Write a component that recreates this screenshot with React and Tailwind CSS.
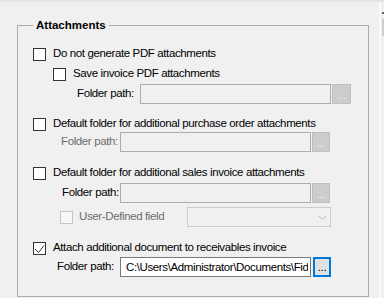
import React from "react";

const Box = ({ checked, disabled }) => (
  <span
    className={
      disabled
        ? "flex h-[13px] w-[13px] shrink-0 items-center justify-center border border-[#c5c5c5] bg-[#f7f7f7]"
        : "flex h-[13px] w-[13px] shrink-0 items-center justify-center border border-[#333333] bg-white"
    }
  >
    {checked && (
      <svg width="11" height="11" viewBox="0 0 11 11">
        <path d="M1 6 L4.5 9.5 L10 2.5" fill="none" stroke="#333333" strokeWidth="1" />
      </svg>
    )}
  </span>
);

const Dots = ({ active, wide }) => (
  <div
    className={
      active
        ? "ml-[2px] flex h-[20px] w-[18px] items-center justify-center border-2 border-[#0078d7] bg-[#e1e1e1] pt-[2px] text-black"
        : wide
        ? "ml-[1px] flex h-[20px] w-[19px] items-center justify-center border border-[#bfbfbf] bg-[#cccccc] pt-[3px] text-[#f2f2f2]"
        : "ml-[1px] flex h-[20px] w-[18px] items-center justify-center border border-[#bfbfbf] bg-[#cccccc] pt-[3px] text-[#f2f2f2]"
    }
  >
    ...
  </div>
);

const Field = ({ value }) => (
  <div
    className={
      value
        ? "h-[20px] w-[191px] border border-[#7a7a7a] bg-white pl-[5px] pr-[2px]"
        : "h-[20px] w-[191px] border border-[#adadad] bg-[#f0f0f0]"
    }
  >
    {value && (
      <div className="h-[18px] overflow-hidden whitespace-nowrap leading-[18px]">{value}</div>
    )}
  </div>
);

const CheckRow = ({ pad, checked, children }) => (
  <div className={`flex h-[16px] items-center ${pad}`}>
    <Box checked={checked} />
    <span className="ml-[7px] whitespace-nowrap">{children}</span>
  </div>
);

export default function App() {
  return (
    <div className="h-[298px] w-[384px] overflow-hidden bg-[#f0f0f0] font-['Liberation_Sans',Arial,sans-serif] text-[11.5px] tracking-[-0.38px] text-black">
      <div className="h-[2px] bg-[#e1e4e9]" />
      <div className="flex h-[296px]">
        <div className="w-[379px] pl-[17px] pt-[16px]">
          <fieldset className="w-[352px] border border-[#adadad] pb-[19px]">
            <legend className="ml-[15px] px-[3px] text-[11.5px] font-bold leading-[14px] tracking-normal">
              Attachments
            </legend>

            <div className="mt-[14px]">
              <CheckRow pad="pl-[15px]">Do not generate PDF attachments</CheckRow>
            </div>
            <div className="mt-[4px]">
              <CheckRow pad="pl-[35px]">Save invoice PDF attachments</CheckRow>
            </div>
            <div className="mt-[2px] flex h-[20px] items-center pl-[59px]">
              <span className="w-[63px]">Folder path:</span>
              <Field />
              <Dots wide />
            </div>

            <div className="mt-[12px]">
              <CheckRow pad="pl-[15px]">Default folder for additional purchase order attachments</CheckRow>
            </div>
            <div className="flex h-[20px] items-center pl-[43px]">
              <span className="w-[59px] text-[#6d6d6d]">Folder path:</span>
              <Field />
              <Dots />
            </div>

            <div className="mt-[13px]">
              <CheckRow pad="pl-[15px]">Default folder for additional sales invoice attachments</CheckRow>
            </div>
            <div className="mt-[2px] flex h-[20px] items-center pl-[44px]">
              <span className="w-[58px]">Folder path:</span>
              <Field />
              <Dots />
            </div>

            <div className="mt-[4px] flex h-[20px] items-center pl-[42px]">
              <Box disabled />
              <span className="ml-[6px] w-[108px] text-[#6d6d6d]">User-Defined field</span>
              <div className="flex h-[20px] w-[144px] items-center justify-end border border-[#cccccc] bg-[#f0f0f0] pr-[3px]">
                <svg width="9" height="5" viewBox="0 0 9 5">
                  <path d="M0.5 0.5 L4.5 4.5 L8.5 0.5" fill="none" stroke="#b8b8b8" strokeWidth="1" />
                </svg>
              </div>
            </div>

            <div className="mt-[13px]">
              <CheckRow pad="pl-[15px]" checked>
                Attach additional document to receivables invoice
              </CheckRow>
            </div>
            <div className="mt-[1px] flex h-[20px] items-center pl-[39px]">
              <span className="w-[63px]">Folder path:</span>
              <Field value="C:\Users\Administrator\Documents\Fidelity\Attachments" />
              <Dots active />
            </div>
          </fieldset>
        </div>
        <div className="flex w-[5px]">
          <div className="w-[2px] bg-[#fafafa]" />
          <div className="flex flex-1 flex-col bg-[#f0f0f0] pl-[1px]">
            <div className="mt-[10px] h-[2px] bg-[#606060]" />
            <div className="mt-[5px] h-[17px] bg-[#cdcdcd]" />
          </div>
        </div>
      </div>
    </div>
  );
}
